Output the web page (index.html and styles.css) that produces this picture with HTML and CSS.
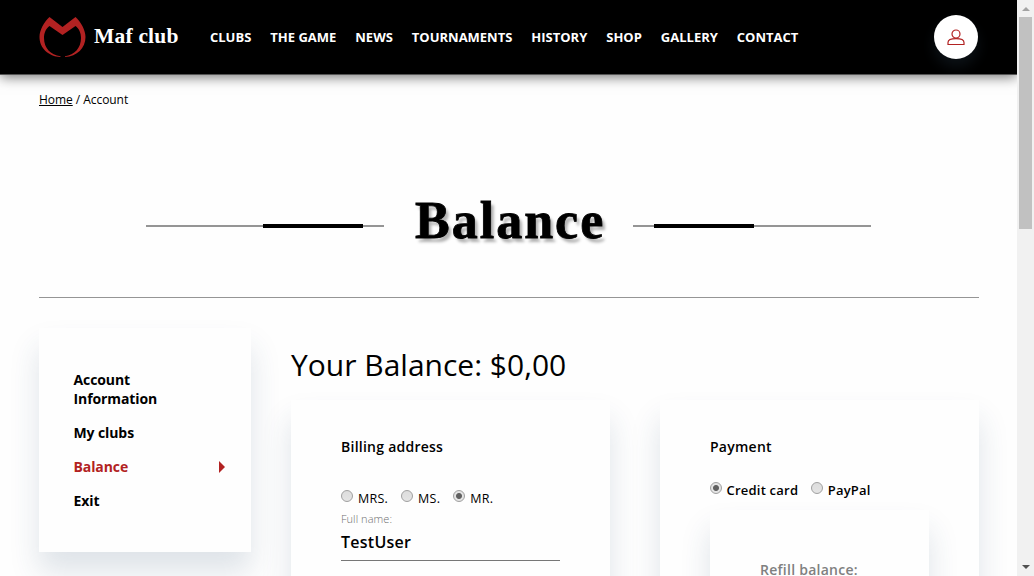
FILE: index.html
```
<!DOCTYPE html>
<html lang="en">
<head>
<meta charset="utf-8">
<title>Maf club - Balance</title>
<link rel="stylesheet" href="styles.css">
</head>
<body>
<div class="window">
  <div class="page">
    <header class="header">
      <a class="brand">
        <svg class="logo" width="48" height="42" viewBox="0 0 48 42"><path fill="#b22222" d="M10.500 1 23.500 11 36.500 1C42 6 46.500 14 46.500 21C46.500 32 38 40.500 26 41V40.300C35.500 39 42 32 42 22C42 17 40 12.500 36.500 10L23.500 19 10.500 10C7 12.500 5 17 5 22C5 32 11.500 39 21.500 40.300V41C9.500 40.500 .5 32 .5 21C.5 14 5 6 10.500 1Z"/></svg>
        <span class="brand-name">Maf club</span>
      </a>
      <nav class="nav">
        <a>CLUBS</a><a>THE GAME</a><a>NEWS</a><a>TOURNAMENTS</a><a>HISTORY</a><a>SHOP</a><a>GALLERY</a><a>CONTACT</a>
      </nav>
      <a class="user">
        <svg width="18" height="17" viewBox="0 0 18 17" fill="none" stroke="#b22222" stroke-width="1.200"><circle cx="9" cy="5" r="4"/><path d="M1 15.500V13.500C1 11 4 9.700 9 9.700S17 11 17 13.500V15.500Z"/></svg>
      </a>
    </header>
    <div class="crumbs"><a class="crumb-link">Home</a> / Account</div>
    <div class="title-row">
      <span class="rule rule-left"><i class="rule-accent"></i></span>
      <h1 class="title">Balance</h1>
      <span class="rule rule-right"><i class="rule-accent"></i></span>
    </div>
    <main class="content">
      <aside class="card sidebar">
        <a>Account<br>Information</a>
        <a>My clubs</a>
        <a class="active">Balance<i class="caret"></i></a>
        <a>Exit</a>
      </aside>
      <section class="main">
        <h2 class="balance">Your Balance: $0,00</h2>
        <div class="columns">
          <div class="card panel">
            <h3 class="panel-title">Billing address</h3>
            <div class="options salutation">
              <label><i class="radio"></i><span>MRS.</span></label>
              <label><i class="radio"></i><span>MS.</span></label>
              <label><i class="radio checked"></i><span>MR.</span></label>
            </div>
            <div class="field">
              <span class="field-label">Full name:</span>
              <span class="field-value">TestUser</span>
            </div>
          </div>
          <div class="card panel">
            <h3 class="panel-title">Payment</h3>
            <div class="options method">
              <label><i class="radio checked"></i><span>Credit card</span></label>
              <label><i class="radio"></i><span>PayPal</span></label>
            </div>
            <div class="card refill">Refill balance:</div>
          </div>
        </div>
      </section>
    </main>
  </div>
  <div class="scrollbar">
    <i class="arrow arrow-up"></i>
    <i class="thumb"></i>
    <i class="arrow arrow-down"></i>
  </div>
</div>
</body>
</html>
```
FILE: styles.css
```
* { box-sizing: border-box; }
body { margin: 0; background: #fefefe; color: #000; font-family: "Open Sans", sans-serif; }
.window { display: flex; width: 1034px; height: 576px; overflow: hidden; }
.page { width: 1017px; height: 576px; overflow: hidden; }

.header { display: flex; align-items: center; height: 74px; padding: 0 39px; background: #000; box-shadow: 0 1px 0 #555, 0 3px 12px rgba(0, 0, 0, .55); }
.brand { display: flex; align-items: center; width: 171px; }
.logo { margin-right: 7px; }
.brand-name { margin-top: -2px; color: #fff; font: bold 21.500px/28px "Liberation Serif", serif; letter-spacing: .2px; white-space: nowrap; }
.nav { display: flex; gap: 19px; color: #fff; font-size: 13px; font-weight: 700; line-height: 18px; letter-spacing: -.01px; white-space: nowrap; }
.user { display: flex; align-items: center; justify-content: center; width: 44px; height: 44px; margin-left: auto; border-radius: 50%; background: #fff; box-shadow: 0 8px 14px rgba(100, 150, 190, .12); }

.crumbs { height: 51px; padding: 17px 39px 0; font-size: 12px; line-height: 18px; letter-spacing: -.05px; }
.crumb-link { text-decoration: underline; }

.title-row { display: flex; align-items: center; height: 173px; margin: 0 38px 0 39px; padding-left: 107px; border-bottom: 1px solid #959595; }
.title { width: 190px; margin: 19px 28px 0 31px; font: bold 52px/60px "Liberation Serif", serif; letter-spacing: 2px; text-shadow: 3px 4px 3px rgba(0, 0, 0, .3); -webkit-text-stroke: .8px #000; white-space: nowrap; }
.rule { display: flex; align-items: center; width: 238px; height: 2px; margin-top: 30px; background: #959595; }
.rule-accent { width: 100px; height: 4px; background: #000; }
.rule-left { padding-left: 117px; }
.rule-right { padding-left: 21px; }

.content { display: flex; gap: 40px; padding: 30px 38px 0 39px; }
.card { background: #fefefe; box-shadow: 0 20px 28px rgba(40, 75, 105, .15); }
.sidebar { display: flex; flex-direction: column; gap: 15px; width: 212px; height: 224px; padding: 42px 26px 0 34.500px; font-size: 14px; font-weight: 700; line-height: 19px; letter-spacing: -.1px; }
.active { display: flex; align-items: center; justify-content: space-between; color: #b22222; }
.caret { border-left: 6px solid #b22222; border-top: 6px solid transparent; border-bottom: 6px solid transparent; }
.main { width: 688px; }
.balance { height: 72px; margin: 0; padding-top: 16px; font-size: 30px; font-weight: 400; line-height: 42px; white-space: nowrap; }
.columns { display: flex; gap: 50px; }
.panel { width: 319px; height: 300px; padding: 37px 50px 0; }
.panel-title { margin: 0; font-size: 14px; font-weight: 650; line-height: 20px; letter-spacing: .25px; }
.options { display: flex; font-size: 13px; line-height: 18px; }
.options label { display: flex; white-space: nowrap; }
.radio { flex: none; width: 12px; height: 12px; margin-right: 5px; border: 1px solid #a0a0a0; border-radius: 50%; background: linear-gradient(#ddd, #e4e4e4); }
.checked { background: radial-gradient(circle, #606060 0 2.500px, #e4e4e4 3.500px); }
.salutation { gap: 13px; margin-top: 33px; font-size: 12.500px; letter-spacing: .25px; }
.method { gap: 13px; margin-top: 25px; font-weight: 650; letter-spacing: .22px; }
.method .radio { margin-right: 4.500px; }
.method span { margin-top: -1px; }
.field { display: flex; flex-direction: column; height: 53px; padding-top: 3px; border-bottom: 1px solid #777; }
.field-label { color: #707070; font-size: 11px; font-weight: 300; line-height: 16px; letter-spacing: .05px; }
.field-value { padding-top: 4px; font-size: 16px; font-weight: 650; line-height: 22px; letter-spacing: .25px; }
.refill { width: 219px; height: 160px; margin-top: 11px; padding: 50px 50px 0; color: #808080; font-size: 14px; font-weight: 650; line-height: 19px; letter-spacing: .25px; white-space: nowrap; }

.scrollbar { display: flex; flex-direction: column; align-items: center; width: 17px; height: 576px; background: #f1f1f1; }
.thumb { width: 13px; height: 212px; margin-top: 6px; background: #c1c1c1; }
.arrow { border-left: 4px solid transparent; border-right: 4px solid transparent; }
.arrow-up { margin-top: 7px; border-bottom: 4px solid #a3a3a3; }
.arrow-down { margin: auto 0 7px; border-top: 4px solid #505050; }
```
